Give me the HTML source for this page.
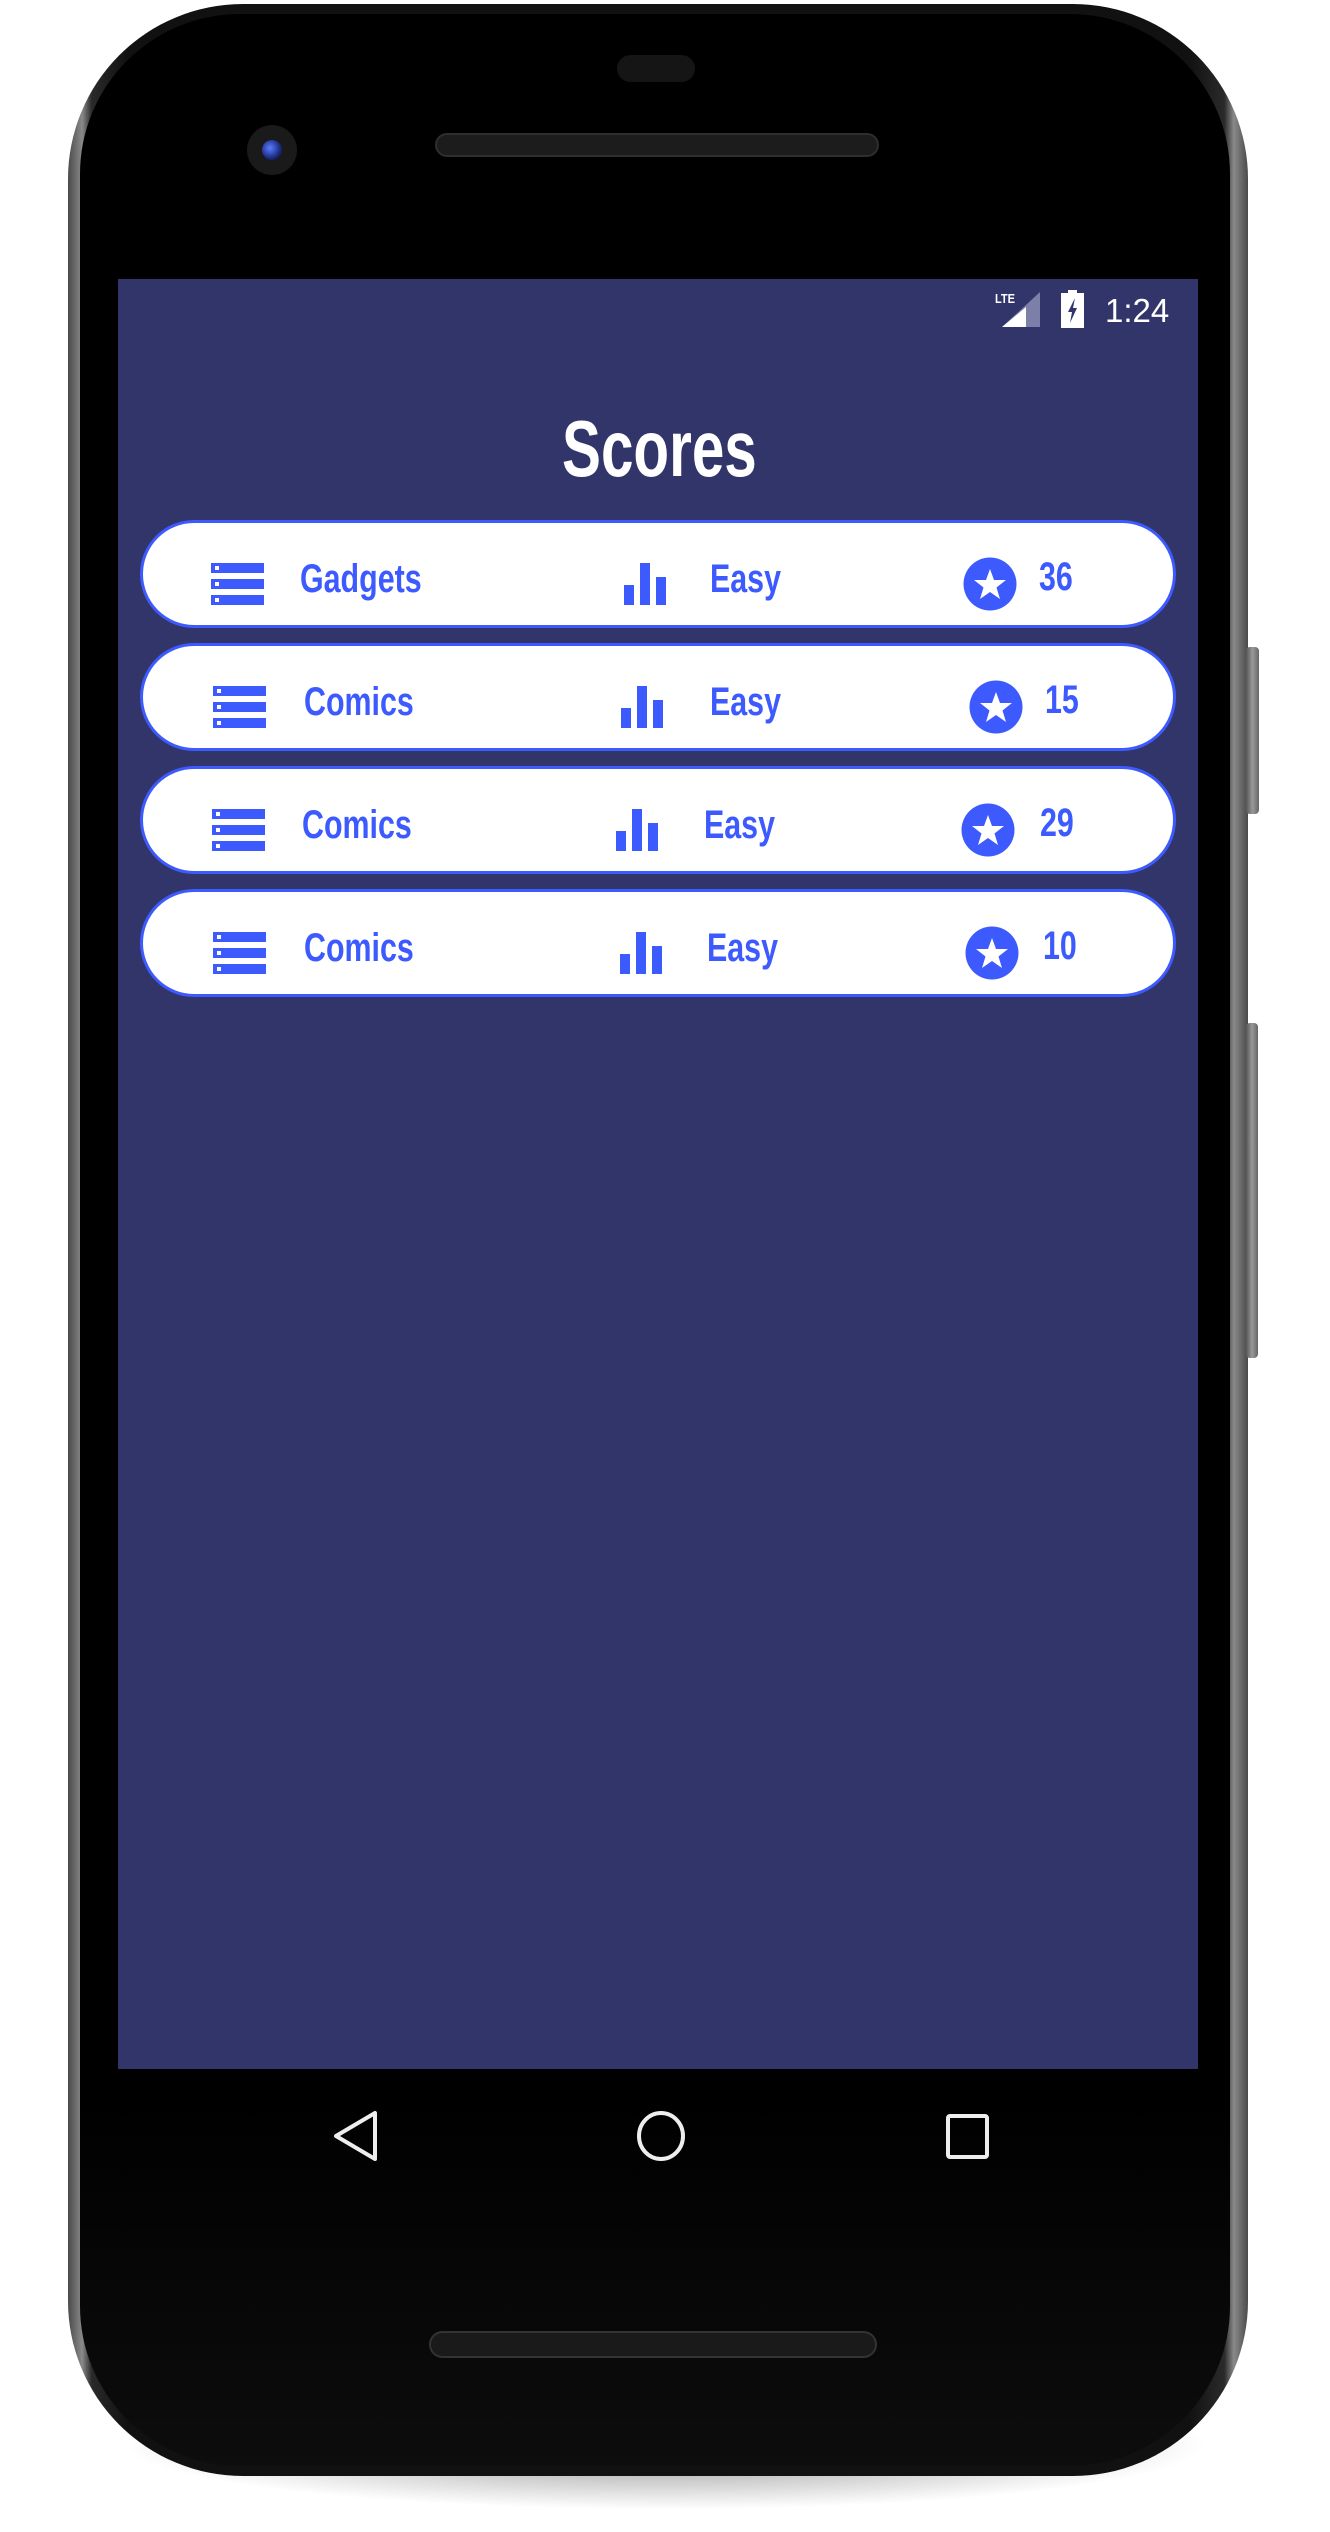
<!DOCTYPE html>
<html><head><meta charset="utf-8"><style>
html,body{margin:0;padding:0;background:#fff;}
body{width:1330px;height:2532px;position:relative;overflow:hidden;font-family:"Liberation Sans",sans-serif;}
.abs{position:absolute;}
.shadow{left:120px;top:2380px;width:1090px;height:130px;border-radius:50%;background:radial-gradient(ellipse at center,rgba(0,0,0,0.45),rgba(0,0,0,0) 70%);}
.frame{left:68px;top:4px;width:1180px;height:2472px;border-radius:175px;background:linear-gradient(90deg,#4a4a4a,#8a8a8a 1.2%,#2a2a2a 2%,#111 5%,#111 95%,#2a2a2a 98%,#8a8a8a 98.8%,#4a4a4a);}
.body{left:80px;top:14px;width:1150px;height:2452px;border-radius:160px;background:linear-gradient(180deg,#000 0%,#000 85%,#0d0d0d 100%);}
.btn{background:linear-gradient(90deg,#555,#999,#666);border-radius:4px;}
.screen{left:118px;top:279px;width:1080px;height:1790px;background:#31356a;}
.card{position:absolute;left:140px;width:1036px;height:108px;box-sizing:border-box;border:3px solid #3d5afe;border-radius:56px;background:#fff;}
.t{position:absolute;font-family:"Liberation Sans",sans-serif;font-weight:bold;color:#3d5afe;font-size:40px;line-height:40px;transform:scaleX(0.76);transform-origin:0 0;white-space:nowrap;}
</style></head><body>
<div class="abs shadow"></div>
<div class="abs frame"></div>
<div class="abs body"></div>
<div class="abs btn" style="left:1246px;top:647px;width:13px;height:167px;"></div>
<div class="abs btn" style="left:1246px;top:1023px;width:12px;height:335px;"></div>
<div class="abs" style="left:617px;top:55px;width:78px;height:27px;border-radius:14px;background:#151515;"></div>
<div class="abs" style="left:435px;top:133px;width:444px;height:24px;border-radius:12px;background:#1c1c1c;border:2px solid #2e2e2e;box-sizing:border-box;"></div>
<div class="abs" style="left:247px;top:125px;width:50px;height:50px;border-radius:50%;background:#1a1a1a;"></div>
<div class="abs" style="left:262px;top:140px;width:20px;height:20px;border-radius:50%;background:radial-gradient(circle at 40% 40%,#5a7cff,#1a2a80 60%,#050510);"></div>
<div class="abs screen"></div>
<div class="abs" style="left:995px;top:292px;font-size:13px;font-weight:bold;color:#fff;line-height:13px;transform:scaleX(0.85);transform-origin:0 0;">LTE</div>
<svg class="abs" style="left:1000px;top:290px" width="42" height="40"><polygon points="40,2 40,37 2,37" fill="#7c80a8"/><polygon points="26,17 26,37 2,37" fill="#fff"/></svg>
<svg class="abs" style="left:1060px;top:289px" width="26" height="40"><rect x="8" y="1" width="9" height="4" fill="#fff"/><rect x="1" y="4" width="23" height="35" fill="#fff"/><polygon points="15,9 8,23 12,23 10,34 17,19 13,19" fill="#31356a"/></svg>
<div class="abs" style="left:1105px;top:293px;font-size:33px;color:#fff;line-height:36px;">1:24</div>
<div class="abs" style="left:562px;top:404px;font-weight:bold;font-size:80px;line-height:90px;color:#fff;transform:scaleX(0.73);transform-origin:0 0;white-space:nowrap;">Scores</div>
<svg width="0" height="0" style="position:absolute"><defs>
<g id="list"><rect x="0" y="0" width="53" height="10" fill="#3d5afe"/><rect x="0" y="16" width="53" height="10" fill="#3d5afe"/><rect x="0" y="32" width="53" height="10" fill="#3d5afe"/><rect x="4" y="3" width="4" height="4" fill="#fff"/><rect x="4" y="19" width="4" height="4" fill="#fff"/><rect x="4" y="35" width="4" height="4" fill="#fff"/></g>
<g id="bars"><rect x="0" y="22" width="10" height="20" fill="#3d5afe"/><rect x="16" y="0" width="10" height="42" fill="#3d5afe"/><rect x="32" y="14" width="10" height="28" fill="#3d5afe"/></g>
<g id="star"><circle cx="27" cy="27" r="26.5" fill="#3d5afe"/><polygon points="27,12 31,23 43,23 33.5,30.5 37,42 27,35 17,42 20.5,30.5 11,23 23,23" fill="#fff"/></g>
</defs></svg>

<div class="card" style="top:520px"></div>
<svg class="abs" style="left:211px;top:563px" width="54" height="43"><use href="#list"/></svg>
<div class="t" style="left:300px;top:559px">Gadgets</div>
<svg class="abs" style="left:624px;top:563px" width="43" height="43"><use href="#bars"/></svg>
<div class="t" style="left:710px;top:559px">Easy</div>
<svg class="abs" style="left:963px;top:557px" width="54" height="54"><use href="#star"/></svg>
<div class="t" style="left:1039px;top:557px">36</div>

<div class="card" style="top:643px"></div>
<svg class="abs" style="left:213px;top:686px" width="54" height="43"><use href="#list"/></svg>
<div class="t" style="left:304px;top:682px">Comics</div>
<svg class="abs" style="left:621px;top:686px" width="43" height="43"><use href="#bars"/></svg>
<div class="t" style="left:710px;top:682px">Easy</div>
<svg class="abs" style="left:969px;top:680px" width="54" height="54"><use href="#star"/></svg>
<div class="t" style="left:1045px;top:680px">15</div>

<div class="card" style="top:766px"></div>
<svg class="abs" style="left:212px;top:809px" width="54" height="43"><use href="#list"/></svg>
<div class="t" style="left:302px;top:805px">Comics</div>
<svg class="abs" style="left:616px;top:809px" width="43" height="43"><use href="#bars"/></svg>
<div class="t" style="left:704px;top:805px">Easy</div>
<svg class="abs" style="left:961px;top:803px" width="54" height="54"><use href="#star"/></svg>
<div class="t" style="left:1040px;top:803px">29</div>

<div class="card" style="top:889px"></div>
<svg class="abs" style="left:213px;top:932px" width="54" height="43"><use href="#list"/></svg>
<div class="t" style="left:304px;top:928px">Comics</div>
<svg class="abs" style="left:620px;top:932px" width="43" height="43"><use href="#bars"/></svg>
<div class="t" style="left:707px;top:928px">Easy</div>
<svg class="abs" style="left:965px;top:926px" width="54" height="54"><use href="#star"/></svg>
<div class="t" style="left:1043px;top:926px">10</div>

<svg class="abs" style="left:320px;top:2100px" width="700" height="70">
<polygon points="55,13 55,59 16,36" fill="none" stroke="#eee" stroke-width="4" stroke-linejoin="round"/>
<ellipse cx="341" cy="36" rx="22" ry="23" fill="none" stroke="#eee" stroke-width="4"/>
<rect x="628" y="16" width="39" height="41" rx="2" fill="none" stroke="#eee" stroke-width="4"/>
</svg>
<div class="abs" style="left:429px;top:2331px;width:448px;height:27px;border-radius:14px;background:#1a1a1a;border:2px solid #333;box-sizing:border-box;"></div>
</body></html>
